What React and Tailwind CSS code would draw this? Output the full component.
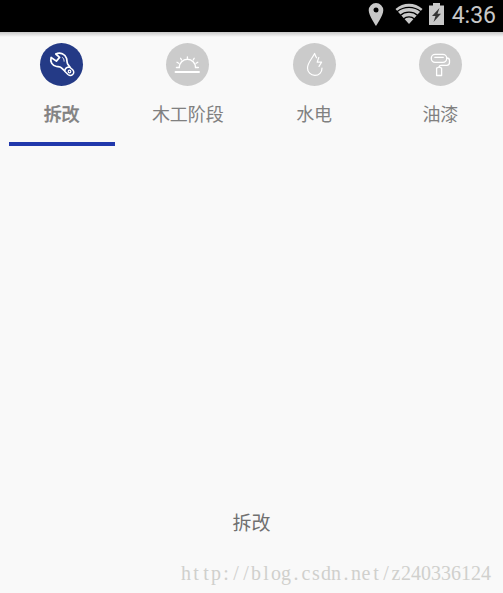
import React, { useState } from 'react';

const WrenchIcon = () => (
    <svg viewBox="0 0 43 43" className="w-full h-full" fill="none" stroke="#fff" strokeWidth="1.700" strokeLinecap="round" strokeLinejoin="round">
        <path d="M15.800 11c4.500-2.200 9.300.2 10.700 4.300.7 2.100.2 4.100 1.200 5.700l2.300 3.300M15.800 11l3.800 3.400-3.200 3.700-5.300-3.600c-1.300 4.300 1.200 8.400 5.500 9 2 .3 3.400 0 4.800 1.300l3 2.800" />
        <path d="M24.700 28.200c.2-2.500 2-4.200 4.800-4.200l3.200 2.800c1.500 1.500 1.300 3.500 0 4.700-1.300 1.200-3.200 1.200-4.700 0z" strokeWidth="1.500" />
        <circle cx="29.500" cy="28.500" r="1.300" strokeWidth="1.200" />
        <path d="M22.500 14.500c1.100.9 1.600 2.200 1.600 3.700" strokeWidth="0.900" />
    </svg>
);

const SunriseIcon = () => (
    <svg viewBox="0 0 43 43" className="w-full h-full" fill="none" stroke="#fff" strokeWidth="1.500" strokeLinecap="round">
        <path d="M9.500 29h23.500" strokeWidth="1.900" />
        <path d="M10.500 24.500h2.700a8.200 8.200 0 0 1 16.400 0h2.700" />
        <path d="M21.400 13.800v1.500M14.600 15.300l.9 1.600M28.200 15.300l-.9 1.600M11 19.300l1.700 1M31.800 19.300l-1.700 1" strokeWidth="1.300" />
    </svg>
);

const WaterIcon = () => (
    <svg viewBox="0 0 43 43" className="w-full h-full" fill="none" stroke="#fff" strokeWidth="1.200" strokeLinecap="round" strokeLinejoin="round">
        <path d="M29 25c.1 4.400-3 7.400-7.100 7.400-4.300 0-7.400-3.400-7.400-7.500 0-5 4.600-9.300 7.100-14.400.5 1.500 1.100 2.900 1.900 4.300" />
        <path d="M25.800 14.500l-1.600 4.600h4.400l-2.600 4.300" />
    </svg>
);

const RollerIcon = () => (
    <svg viewBox="0 0 43 43" className="w-full h-full" fill="none" stroke="#fff" strokeWidth="1.300" strokeLinecap="round" strokeLinejoin="round">
        <rect x="12.300" y="11.300" width="15.400" height="8" rx="3.800" />
        <path d="M15.800 14.300h8.500" />
        <path d="M27.700 15c1.800 0 2.800.8 2.800 2.300v2.200c0 2-.9 2.800-2.700 2.800h-5.400c-1.500 0-2.200.6-2.200 1.800" />
        <path d="M17.600 25.200l2.500-1.200 2.500 1.200v7.300h-5z" />
    </svg>
);

const TABS = [
    { label: '拆改', Icon: WrenchIcon },
    { label: '木工阶段', Icon: SunriseIcon },
    { label: '水电', Icon: WaterIcon },
    { label: '油漆', Icon: RollerIcon },
];

const WATERMARK = 'http://blog.csdn.net/z240336124';

const StatusBar = () => (
    <div className="h-8 shrink-0 bg-black flex items-start justify-end pr-[7px] text-[#c8c8c8]">
        <svg className="w-4 h-6 mt-[3px] mr-[11px]" viewBox="0 0 16 24" fill="currentColor">
            <path fillRule="evenodd" d="M8 0a7.300 7.300 0 0 0-7.300 7.300C.7 12.500 8 23 8 23s7.300-10.500 7.300-15.700A7.300 7.300 0 0 0 8 0zm0 4.500a2.500 2.500 0 1 1 0 5 2.500 2.500 0 0 1 0-5z" />
        </svg>
        <svg className="w-[28px] h-[21px] mt-[3px] mr-[6px]" viewBox="0 0 28 21">
            <path d="M0.500 6C8-1 20-1 27.500 6L14 21z" fill="currentColor" />
            <path d="M2 8.800C9 3 19 3 26 8.800M5.200 12.400c5-4.300 12.600-4.300 17.600 0M8.500 16c3-2.800 8-2.800 11 0" fill="none" stroke="#000" strokeWidth="1.300" />
        </svg>
        <svg className="w-[15px] h-[23px] mt-[3px] mr-[8px]" viewBox="0 0 15 23">
            <path d="M0 2.500h4V0h7v2.500h4V22H0z" fill="currentColor" />
            <path d="M10.500 5L3 13h3.500L4.500 19l7.500-8.300H8.500z" fill="#333" />
        </svg>
        <span className="font-['Roboto',sans-serif] text-[23px] leading-[31px]">4:36</span>
    </div>
);

const App = () => {
    const [active, setActive] = useState(0);

    return (
        <div className="w-[503px] h-[593px] overflow-hidden flex flex-col bg-[#f9f9f9] font-['Noto_Sans_CJK_SC',sans-serif]">
            <StatusBar />
            <div className="h-[5px] shrink-0 bg-linear-to-b from-[#c8c8c8] to-[#f9f9f9]" />

            {/* Tabs */}
            <div className="w-[505px] -ml-[1.5px] grid grid-cols-4 shrink-0">
                {TABS.map(({ label, Icon }, i) => (
                    <button key={label} onClick={() => setActive(i)} className="h-[110px] pt-[6px] flex flex-col items-center">
                        <span className={`w-[43px] h-[43px] rounded-full ${i === active ? 'bg-[#243a86]' : 'bg-[#cbcbcb]'}`}>
                            <Icon />
                        </span>
                        <span className={`mt-[14px] text-[18px] leading-[26px] text-[#808080] ${i === active ? '[-webkit-text-stroke:0.6px_#808080]' : ''}`}>
                            {label}
                        </span>
                        {i === active && <span className="mt-[16px] ml-px w-[106px] h-[4px] bg-[#2138ac]" />}
                    </button>
                ))}
            </div>

            {/* Page content */}
            <div className="flex-1 flex flex-col justify-end">
                <p className="text-center text-[19px] leading-7 text-[#707070]">{TABS[active].label}</p>
                <p className="mt-[23px] pr-[12px] pb-[6px] text-right whitespace-nowrap text-[20px] leading-[28px] text-[#d0d0cd] font-['Liberation_Serif',serif]">
                    {WATERMARK.split('').map((ch, i) => (
                        <span key={i} className="inline-block w-[10px] text-center">{ch}</span>
                    ))}
                </p>
            </div>
        </div>
    );
};

export default App;
